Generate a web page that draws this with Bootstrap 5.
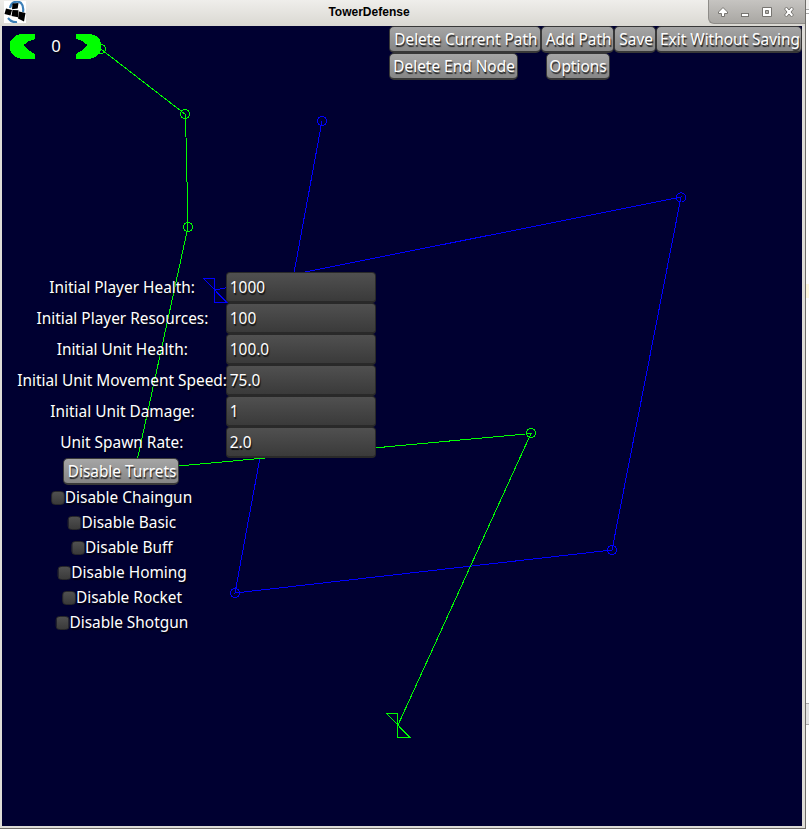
<!DOCTYPE html>
<html lang="en">
<head>
<meta charset="utf-8">
<title>TowerDefense</title>
<meta name="viewport" content="width=device-width, initial-scale=1">
<link href="https://cdn.jsdelivr.net/npm/bootstrap@5.3.0/dist/css/bootstrap.min.css" rel="stylesheet">
<style>
body{width:809px;height:830px;overflow:hidden;background:#fff;font-family:"Noto Sans",sans-serif;font-size:16.8px;line-height:1;color:#fff}
.win{width:806px;height:829px;background:#dedcd7;border-right:1px solid #6f6d69;border-bottom:1px solid #6f6d69;padding:0 2px 2px;border-left:0}
.titlebar{height:26px;margin:0 -2px;background:linear-gradient(#efeeeb,#dad8d2);position:relative}
.win-title{font:bold 12px "Liberation Sans",sans-serif;color:#000;padding-right:67px;margin-top:-2px}
.controls{position:absolute;right:0;top:0;width:97px;height:24px;background:linear-gradient(#c6c4c1,#a9a7a3);border:1px solid #8e8c88;border-width:0 0 1px 1px;border-radius:0 0 0 6px}
.app-icon{position:absolute;left:4px;top:1px}
.stage{width:800px;height:800px;background:#000031;position:relative;text-shadow:1px 2px 1px rgba(0,0,0,.75)}
.map{position:absolute;inset:0;fill:none;shape-rendering:crispEdges}
.gbtn{display:flex;align-items:center;justify-content:center;height:27px;background:linear-gradient(#a5a5a5,#868686);border:1px solid #383838;border-bottom-width:2px;border-radius:5px;color:#fff;padding:0;font-size:inherit;line-height:1;text-shadow:1px 2px 1px rgba(0,0,0,.75);white-space:nowrap}
.gbtn span,.lbl span,.fld span,.crow{transform:translateX(.8px) scaleX(.918);white-space:nowrap}
.fld span{transform-origin:0 50%}
.tools{position:absolute;left:387px;top:0;display:grid;grid-template-columns:152px 73px 42px 146px;grid-auto-rows:27px;justify-items:stretch}
.w-end{width:129px}.w-opt{width:64px}.w-tur{width:116px}
.picker{position:absolute;left:8px;top:8px;width:91px;height:25px}
.picker span{padding-left:1px}
.panel{position:absolute;left:15px;top:246px;width:359px}
.frow{height:31px}
.lbl{width:209px}
.fld{width:150px;height:31px;background:linear-gradient(#505050,#3a3a3a);border:1px solid #292929;border-bottom-width:2px;border-radius:4px;padding-left:2px}
.checks{width:208px}
.crow{height:25px}
.cbox{width:15px;height:14px;border:1px solid #292929;border-radius:4px;background:linear-gradient(#505050,#3a3a3a);margin-top:1px}
.edge{position:absolute;left:806px;top:0;width:3px}
</style>
</head>
<body>
<div class="win">
  <div class="titlebar d-flex align-items-center justify-content-center">
    <svg class="app-icon" width="22" height="22" viewBox="0 0 22 22"><rect width="22" height="22" fill="#fff"/><path d="M6 7C7 1 13-1 17 2q3 3 2 9M4 17q4 5 9 4" fill="none" stroke="#3d80b8" stroke-width="2.2"/><path d="M8.500 2.500l6-.5-.8 5.500-5.700.8zM2 7.500l6 1.500-1.500 5.500-6-1.500zM8.500 9l6 .3-.5 7-6.500-1.300zM15 10.500l6.500 1.500-1.500 8.500-6-3z" fill="#000"/></svg>
    <span class="win-title">TowerDefense</span>
    <div class="controls">
      <svg class="d-block" width="96" height="23" viewBox="709 0 96 23" fill="#fff" stroke="#777571" stroke-width="1"><path d="M723 7.500l4.500 4.500v1.500h-3v3h-3v-3h-3v-1.500z"/><rect x="741.500" y="13.500" width="7" height="3"/><path fill-rule="evenodd" d="M762.500 7.500h9v9h-9zM765.500 10.500h3v3h-3z"/><path d="M784.500 9l2-2 2.500 3 2.500-3 2 2-2.500 3 2.500 3-2 2-2.500-3-2.500 3-2-2 2.500-3z"/></svg>
    </div>
  </div>
  <div class="stage">
    <svg class="map" width="800" height="800" viewBox="2 26 800 800">
      <g stroke="#00f">
        <path d="M215 290L681 197 612 550 235 593 322 121"/>
        <path d="M203.500 278.500h11v24h12.500z"/>
        <g><circle cx="681" cy="197.500" r="4.600"/><circle cx="612" cy="550" r="4.600"/><circle cx="235" cy="593" r="4.600"/><circle cx="322" cy="121" r="4.600"/></g>
      </g>
      <g stroke="#0f0">
        <path d="M101.500 49.500L185.500 114.500 188 227 135 470 531 433.500 398 725"/>
        <path d="M386.500 713.500h11v24h12.500z"/>
        <g><circle cx="101" cy="49" r="4.600"/><circle cx="185" cy="114" r="4.600"/><circle cx="188" cy="227" r="4.600"/><circle cx="531" cy="433" r="4.600"/></g>
      </g>
    </svg>
    <div class="picker d-flex align-items-center justify-content-between">
      <svg width="25" height="25" viewBox="0 0 25 25" fill="#0f0" shape-rendering="crispEdges"><path id="arrow" d="M25 0H10L5 2 1 6 0 9v7l2 4 4 3 5 2h14v-5l-5-3-5-4v-1l-2-1 2-1 4-3 6-2z"/></svg>
      <span>0</span>
      <svg width="25" height="25" viewBox="0 0 25 25" fill="#0f0" shape-rendering="crispEdges"><use href="#arrow" transform="translate(25 0) scale(-1 1)"/></svg>
    </div>
    <div class="tools">
      <button class="gbtn"><span>Delete Current Path</span></button><button class="gbtn"><span>Add Path</span></button><button class="gbtn"><span>Save</span></button><button class="gbtn"><span>Exit Without Saving</span></button>
      <button class="gbtn w-end"><span>Delete End Node</span></button><button class="gbtn w-opt mx-auto"><span>Options</span></button>
    </div>
    <div class="panel">
      <div class="frow d-flex align-items-center"><div class="lbl d-flex justify-content-center"><span>Initial Player Health:</span></div><div class="fld d-flex align-items-center"><span>1000</span></div></div>
      <div class="frow d-flex align-items-center"><div class="lbl d-flex justify-content-center"><span>Initial Player Resources:</span></div><div class="fld d-flex align-items-center"><span>100</span></div></div>
      <div class="frow d-flex align-items-center"><div class="lbl d-flex justify-content-center"><span>Initial Unit Health:</span></div><div class="fld d-flex align-items-center"><span>100.0</span></div></div>
      <div class="frow d-flex align-items-center"><div class="lbl d-flex justify-content-center"><span>Initial Unit Movement Speed:</span></div><div class="fld d-flex align-items-center"><span>75.0</span></div></div>
      <div class="frow d-flex align-items-center"><div class="lbl d-flex justify-content-center"><span>Initial Unit Damage:</span></div><div class="fld d-flex align-items-center"><span>1</span></div></div>
      <div class="frow d-flex align-items-center"><div class="lbl d-flex justify-content-center"><span>Unit Spawn Rate:</span></div><div class="fld d-flex align-items-center"><span>2.0</span></div></div>
      <div class="checks d-flex flex-column align-items-center">
        <button class="gbtn w-tur"><span>Disable Turrets</span></button>
        <div class="crow d-flex align-items-center"><i class="cbox"></i>Disable Chaingun</div>
        <div class="crow d-flex align-items-center"><i class="cbox"></i>Disable Basic</div>
        <div class="crow d-flex align-items-center"><i class="cbox"></i>Disable Buff</div>
        <div class="crow d-flex align-items-center"><i class="cbox"></i>Disable Homing</div>
        <div class="crow d-flex align-items-center"><i class="cbox"></i>Disable Rocket</div>
        <div class="crow d-flex align-items-center"><i class="cbox"></i>Disable Shotgun</div>
      </div>
    </div>
  </div>
</div>
<svg class="edge" width="3" height="830" shape-rendering="crispEdges"><path fill="#f0efed" d="M0 0h3v9H0z"/><path fill="#aaa" d="M0 9h3v1H0zM0 13h3v1H0zM0 703h3v1H0zM0 724h3v1H0z"/><path fill="#fff9df" d="M0 284h3v14H0z"/><path fill="#e4e4e4" d="M0 704h3v20H0z"/></svg>
<script src="https://cdn.jsdelivr.net/npm/bootstrap@5.3.0/dist/js/bootstrap.bundle.min.js"></script>
</body>
</html>
